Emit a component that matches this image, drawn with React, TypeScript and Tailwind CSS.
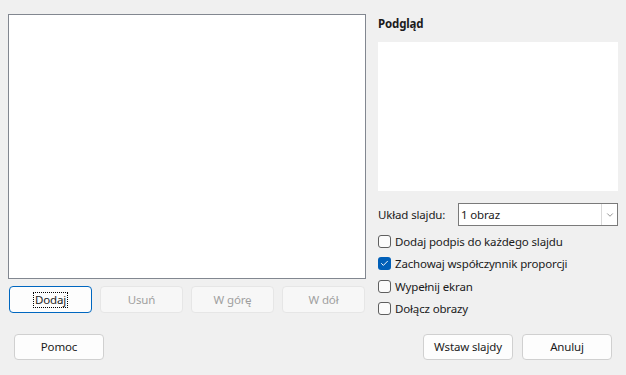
import { Check, ChevronDown } from 'lucide-react'

const OPTIONS = [
  { label: 'Dodaj podpis do każdego slajdu', checked: false },
  { label: 'Zachowaj współczynnik proporcji', checked: true },
  { label: 'Wypełnij ekran', checked: false },
  { label: 'Dołącz obrazy', checked: false },
]

function Btn({ children, className = '' }: { children: React.ReactNode; className?: string }) {
  return (
    <button
      className={`h-[26px] w-[90px] rounded-[4px] border border-[#d0d0d0] bg-[#fdfdfd] text-[#1b1b1b] ${className}`}
    >
      {children}
    </button>
  )
}

export default function App() {
  return (
    <div
      className="h-[375px] w-[626px] bg-[#f0f0f0] text-[11.5px] tracking-[-0.15px] text-[#1b1b1b]"
      style={{ fontFamily: '"Noto Sans", "Open Sans", sans-serif' }}
    >
      <div className="flex h-[320px] pt-[14px]">
        {/* left: image list */}
        <div className="ml-[8px] flex w-[358px] flex-col">
          <div className="h-[265px] border border-[#828790] bg-white" />
          <div className="mt-[7px] flex gap-[8px] pl-[1px]">
            <button className="flex h-[27px] w-[83px] items-center justify-center rounded-[4px] border border-[#0067c0] bg-[#fdfdfd]">
              <span className="border border-dotted border-black px-[1px] leading-[14px]">Dodaj</span>
            </button>
            {['Usuń', 'W górę', 'W dół'].map((t) => (
              <button
                key={t}
                className="h-[27px] w-[83px] rounded-[4px] border border-[#e6e6e6] bg-[#f7f7f7] text-[#a0a0a0]"
              >
                {t}
              </button>
            ))}
          </div>
        </div>

        {/* right: preview */}
        <div className="ml-[12px] flex w-[240px] flex-col">
          <div className="mt-[1px] h-[17px] font-bold leading-[17px]">Podgląd</div>
          <div className="mt-[10px] h-[149px] bg-white" />
          <div className="mt-[12px] flex items-center">
            <span className="w-[80px]">Układ slajdu:</span>
            <div className="flex h-[23px] w-[160px] items-center border border-[#7a7a7a] bg-white">
              <span className="flex-1 pl-[2px]">1 obraz</span>
              <span className="flex h-full w-[16px] items-center justify-center border-l border-[#d9d9d9]">
                <ChevronDown className="h-[10px] w-[10px] text-[#555]" strokeWidth={1.5} />
              </span>
            </div>
          </div>
          <div className="mt-[4px] flex flex-col">
            {OPTIONS.map((o) => (
              <label key={o.label} className="flex h-[22.5px] items-center gap-[4px]">
                {o.checked ? (
                  <span className="flex h-[13px] w-[13px] items-center justify-center rounded-[3px] bg-[#005fb8]">
                    <Check className="h-[9px] w-[9px] text-white" strokeWidth={2.5} />
                  </span>
                ) : (
                  <span className="h-[13px] w-[13px] rounded-[3px] border border-[#5f5f5f] bg-[#fbfbfb]" />
                )}
                <span>{o.label}</span>
              </label>
            ))}
          </div>
        </div>
      </div>

      {/* bottom buttons */}
      <div className="mt-[14px] flex px-[14px]">
        <Btn>Pomoc</Btn>
        <div className="ml-auto flex gap-[9px]">
          <Btn>Wstaw slajdy</Btn>
          <Btn>Anuluj</Btn>
        </div>
      </div>
    </div>
  )
}
